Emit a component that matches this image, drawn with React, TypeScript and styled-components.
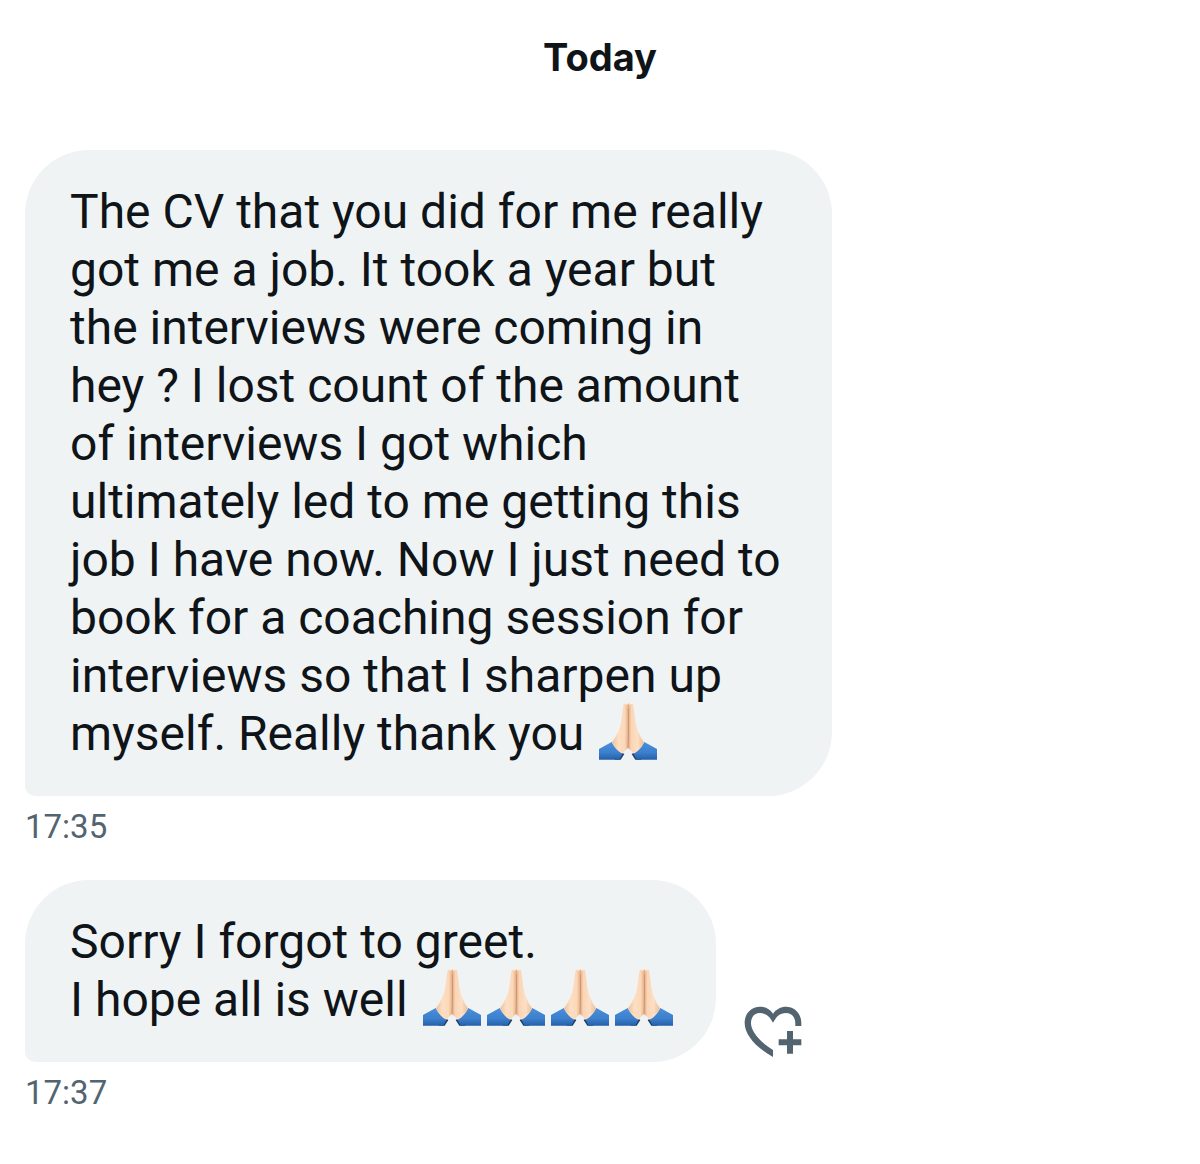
import React from 'react';
import styled, { createGlobalStyle } from 'styled-components';

const GlobalStyle = createGlobalStyle`
  *, *::before, *::after { box-sizing: border-box; }
  body {
    margin: 0;
    background: #ffffff;
    color: #0f1419;
    font-family: Roboto, "Liberation Sans", sans-serif;
  }
`;

const Conversation = styled.main`
  padding: 34px 25px;
`;

const DayHeading = styled.h1`
  margin: 0 0 70px;
  font-family: Inter, "Liberation Sans", sans-serif;
  font-size: 38px;
  line-height: 46px;
  font-weight: 700;
  text-align: center;
`;

const MessageList = styled.ol`
  display: flex;
  flex-direction: column;
  gap: 32px;
  margin: 0;
  padding: 0;
  list-style: none;
`;

const MessageRow = styled.div`
  display: flex;
  align-items: flex-end;
  gap: 24px;
`;

const Bubble = styled.p<{ $wide?: boolean }>`
  width: ${({ $wide }) => ($wide ? '807px' : 'auto')};
  max-width: 100%;
  margin: 0;
  padding: 33px 40px 33px 45px;
  border-radius: 64px 64px 64px 10px;
  background: #eff3f4;
  font-size: 48px;
  line-height: 58px;
`;

const Timestamp = styled.time`
  display: block;
  margin-top: 10px;
  color: #536471;
  font-size: 33px;
  line-height: 42px;
`;

const ReactionButton = styled.button`
  display: flex;
  padding: 4px;
  border: 0;
  background: none;
  color: #536471;
  cursor: pointer;
`;

const EmojiDrawing = styled.svg`
  width: 58px;
  height: 58px;
  margin: -6px 3px;
  vertical-align: -4px;
`;

const GradientDefs = styled.svg`
  position: absolute;
`;

function EmojiGradients() {
  return (
    <GradientDefs width="0" height="0" aria-hidden="true">
      <defs>
        <linearGradient id="skinLeft" x1="0" x2="1" y1="0" y2="0">
          <stop offset="0" stopColor="#f0c095" />
          <stop offset="0.4" stopColor="#fddfc3" />
          <stop offset="0.8" stopColor="#fbd8b8" />
          <stop offset="1" stopColor="#e6b28c" />
        </linearGradient>
        <linearGradient id="skinRight" x1="0" x2="1" y1="0" y2="0">
          <stop offset="0" stopColor="#dda57e" />
          <stop offset="0.2" stopColor="#fad5b5" />
          <stop offset="0.6" stopColor="#fddfc3" />
          <stop offset="1" stopColor="#efbd94" />
        </linearGradient>
        <linearGradient id="sleeve" x1="0" x2="0" y1="0" y2="1">
          <stop offset="0" stopColor="#4a90dc" />
          <stop offset="0.6" stopColor="#3b7fcd" />
          <stop offset="1" stopColor="#2560a8" />
        </linearGradient>
      </defs>
    </GradientDefs>
  );
}

function FoldedHands() {
  return (
    <EmojiDrawing viewBox="43 35 174 174" role="img" aria-label="Folded hands">
      <path d="M94 192 L112 187 L119 191 L108 208 H90 Z M166 192 L148 187 L141 191 L152 208 H170 Z" fill="#1d3a63" />
      <path d="M43 176 L81 155 C88 168 98 182 114 190 L104 208 H43 Z" fill="url(#sleeve)" />
      <path d="M217 176 L179 155 C172 168 162 182 146 190 L156 208 H217 Z" fill="url(#sleeve)" />
      <path d="M130 42 C127 36 118 37 117 42 C114 55 113 72 110 92 C107 114 97 134 82 156 C89 172 99 183 113 190 C118 183 124 178 130 174 Z" fill="url(#skinLeft)" />
      <path d="M130 42 C133 36 144 37 145 42 C148 55 149 72 152 92 C155 114 163 134 178 156 C171 172 161 183 147 190 C142 183 136 178 130 174 Z" fill="url(#skinRight)" />
      <path d="M131 54 C132 90 132 130 130 172" fill="none" stroke="#c48a63" strokeWidth="2" />
      <path d="M120 41 C123 38 126 39 128 43 M134 43 C136 39 140 38 142 41" fill="none" stroke="#fff1e2" strokeWidth="4" />
    </EmojiDrawing>
  );
}

function HeartPlus() {
  return (
    <svg width="58" height="52" viewBox="36 45 174 156" fill="currentColor" aria-hidden="true">
      <path d="M123 198 C73 170 38 132 38 96 C38 66 59 47 84 47 C101 47 114 55 123 68 C132 55 146 47 162 47 C188 47 208 67 208 98 V105 H190 V98 C190 77 178 66 161 66 C146 66 136 74 130 84 L123 95 L116 84 C110 74 100 66 84 66 C68 66 57 77 57 97 C57 121 84 153 123 177 Z" />
      <path d="M165 120 H183 V145 H208 V163 H183 V188 H165 V163 H140 V145 H165 Z" />
    </svg>
  );
}

export default function App() {
  return (
    <>
      <GlobalStyle />
      <EmojiGradients />
      <Conversation>
        <DayHeading>Today</DayHeading>
        <MessageList>
          <li>
            <MessageRow>
              <Bubble $wide>
                The CV that you did for me really<br />
                got me a job. It took a year but<br />
                the interviews were coming in<br />
                hey ? I lost count of the amount<br />
                of interviews I got which<br />
                ultimately led to me getting this<br />
                job I have now. Now I just need to<br />
                book for a coaching session for<br />
                interviews so that I sharpen up<br />
                myself. Really thank you <FoldedHands />
              </Bubble>
            </MessageRow>
            <Timestamp dateTime="17:35">17:35</Timestamp>
          </li>
          <li>
            <MessageRow>
              <Bubble>
                Sorry I forgot to greet.<br />
                I hope all is well <FoldedHands /><FoldedHands /><FoldedHands /><FoldedHands />
              </Bubble>
              <ReactionButton type="button" aria-label="Add reaction">
                <HeartPlus />
              </ReactionButton>
            </MessageRow>
            <Timestamp dateTime="17:37">17:37</Timestamp>
          </li>
        </MessageList>
      </Conversation>
    </>
  );
}
